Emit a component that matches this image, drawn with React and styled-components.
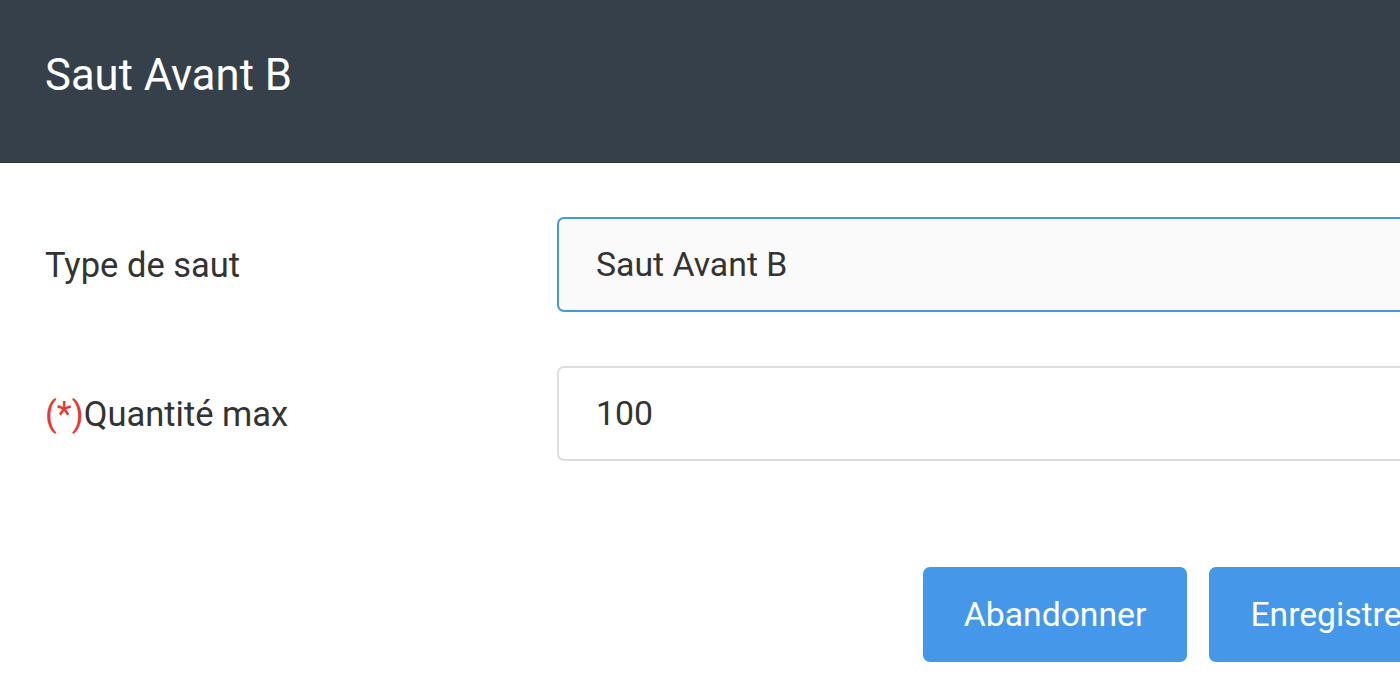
import React from "react";
import styled, { createGlobalStyle } from "styled-components";

const Global = createGlobalStyle`
  html, body { margin: 0; padding: 0; background: #ffffff; overflow: hidden; }
  body { font-family: Roboto, "Liberation Sans", Arial, sans-serif; }
  * { box-sizing: border-box; }
`;

const Page = styled.div`
  width: 1499px;
  min-height: 700px;
  background: #ffffff;
`;

const Header = styled.header`
  height: 163px;
  background: #36404a;
  display: flex;
  align-items: center;
  padding: 0 45px 12px;
  border-bottom: 1px solid #2e363d;
`;

const Title = styled.h1`
  margin: 0;
  font-size: 43.6px;
  font-weight: 400;
  color: #ffffff;
  letter-spacing: 0;
`;

const Body = styled.div`
  padding: 54px 45px 0;
  display: flex;
  flex-direction: column;
  gap: 54px;
`;

const Row = styled.div`
  display: grid;
  grid-template-columns: 512px 1fr;
  align-items: center;
`;

const Label = styled.label`
  font-size: 34.5px;
  color: #333333;
`;

const Req = styled.span`
  color: #e8392f;
`;

const Field = styled.div`
  height: 95px;
  border: 2px solid ${(p) => (p.$focused ? "#4a94e6" : "#dddddd")};
  background: ${(p) => (p.$focused ? "#fafafa" : "#ffffff")};
  border-radius: 7px;
  display: flex;
  align-items: center;
  padding: 0 37px;
  font-size: 33.8px;
  color: #333333;
`;

const Actions = styled.div`
  display: flex;
  justify-content: flex-end;
  gap: 22px;
  margin-top: 52px;
`;

const Button = styled.button`
  height: 95px;
  border: none;
  border-radius: 7px;
  background: #4597ea;
  color: #ffffff;
  font-family: inherit;
  font-size: 33.7px;
  padding: 0 41px;
  cursor: pointer;
`;

export default function App() {
  return (
    <>
      <Global />
      <Page>
        <Header>
          <Title>Saut Avant B</Title>
        </Header>
        <Body>
          <Row>
            <Label>Type de saut</Label>
            <Field $focused>Saut Avant B</Field>
          </Row>
          <Row>
            <Label>
              <Req>(*)</Req>Quantité max
            </Label>
            <Field>100</Field>
          </Row>
          <Actions>
            <Button>Abandonner</Button>
            <Button>Enregistrer</Button>
          </Actions>
        </Body>
      </Page>
    </>
  );
}
